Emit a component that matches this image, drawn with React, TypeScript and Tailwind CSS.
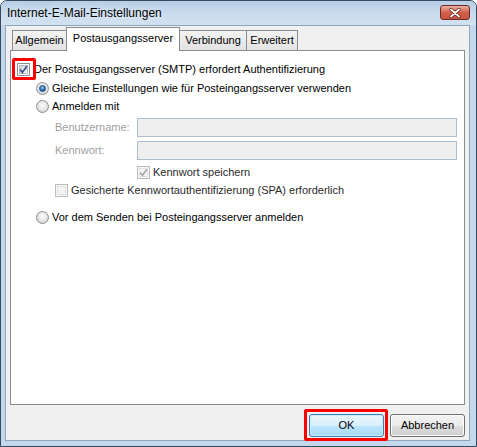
import clsx from "clsx";

const font = "font-['Liberation_Sans',Arial,sans-serif]";

function CheckBox({ checked, disabled }: { checked?: boolean; disabled?: boolean }) {
  return (
    <span
      className={clsx(
        "w-[13px] h-[13px] shrink-0 border flex items-center justify-center",
        disabled ? "border-[#bcbcbc] bg-[#f7f7f7]" : "border-[#8e8f8f] bg-white"
      )}
    >
      <span
        className={clsx(
          "w-[9px] h-[9px] relative",
          disabled
            ? "bg-[#f4f4f4] border border-[#e2e2e2]"
            : "bg-gradient-to-br from-[#c9d2df] to-[#f4f6f9] border border-[#b5bdc9]"
        )}
      >
        {checked && (
          <svg viewBox="0 0 11 11" className="absolute -left-[2px] -top-[2px] w-[11px] h-[11px]">
            <path
              d="M2.2 5.6 L4.4 8.4 L8.9 2.3"
              fill="none"
              stroke={disabled ? "#a9a9a9" : "#3f4f86"}
              strokeWidth="1.7"
            />
          </svg>
        )}
      </span>
    </span>
  );
}

function Radio({ selected }: { selected?: boolean }) {
  return (
    <span className="w-[13px] h-[13px] shrink-0 rounded-full border border-[#8e8f8f] bg-[radial-gradient(circle_at_50%_40%,#f8f8f8_15%,#d9d9d9_70%,#c8c8c8)] flex items-center justify-center">
      {selected && (
        <span className="w-[7px] h-[7px] rounded-full bg-[radial-gradient(circle_at_45%_35%,#b5e0ff,#2f7fc8_45%,#0c3b73)] border border-[#1b4f86]" />
      )}
    </span>
  );
}

function Field({ label, className }: { label: string; className?: string }) {
  return (
    <div className={clsx("flex items-center pl-[44px]", className)}>
      <span className="w-[82px] text-[#a0a0a0]">{label}</span>
      <div className="w-[320px] h-[19px] border border-[#afbccb] bg-[#efefef]" />
    </div>
  );
}

function Tab({ label, active, className }: { label: string; active?: boolean; className?: string }) {
  return (
    <div
      className={clsx(
        "flex items-center justify-center border border-[#898c95] -ml-px",
        active
          ? "h-[24px] -mb-px bg-white border-b-0 relative z-10 pb-[3px]"
          : "h-[20px] bg-gradient-to-b from-[#f3f3f3] to-[#e3e3e3] border-b-0",
        className
      )}
    >
      {label}
    </div>
  );
}

export default function App() {
  return (
    <div className={clsx("w-[477px] h-[447px] bg-[#c4d7eb] border border-[#34485e] rounded-t-[7px] flex flex-col pl-[4px] pr-[6px] pb-[5px] text-[11px] text-black", font)}>
      {/* caption */}
      <div className="h-[24px] -mx-[4px] -mr-[6px] pl-[6px] pr-[6px] flex justify-between items-start bg-gradient-to-b from-[#b6cde6] via-[#c8daed] to-[#d3e2f1] rounded-t-[6px]">
        <span className="text-[12px] leading-[25px] [text-shadow:0_0_6px_#ffffff]">Internet-E-Mail-Einstellungen</span>
        <button className="mt-[4px] w-[30px] h-[15px] rounded-[3px] border border-[#6e2a22] bg-gradient-to-b from-[#e8b1a4] via-[#d25f4b] to-[#c9533f] flex items-center justify-center">
          <svg viewBox="0 0 12 10" className="w-[12px] h-[10px]">
            <path d="M2 1.5 L10 8.5 M10 1.5 L2 8.5" stroke="#5a1d16" strokeWidth="3.2" strokeLinecap="round" />
            <path d="M2 1.5 L10 8.5 M10 1.5 L2 8.5" stroke="#ffffff" strokeWidth="1.8" strokeLinecap="round" />
          </svg>
        </button>
      </div>

      {/* client area */}
      <div className="flex-1 flex flex-col bg-[#f0f0f0] border border-[#8fa5bb] px-[4px]">
        <div className="h-[24px] pt-[1px] flex items-end pl-[3px]">
          <Tab label="Allgemein" className="w-[55px]" />
          <Tab label="Postausgangsserver" active className="w-[114px]" />
          <Tab label="Verbindung" className="w-[68px]" />
          <Tab label="Erweitert" className="w-[52px]" />
        </div>

        <div className="flex-1 bg-white border border-[#898c95] flex flex-col">
          <div className="mt-[9px] h-[18px] flex items-center pl-[6px] gap-[4px] relative">
            <CheckBox checked />
            <span>Der Postausgangsserver (SMTP) erfordert Authentifizierung</span>
            <span className="absolute left-[1px] -top-[2px] w-[24px] h-[22px] border-[3px] border-[#ff0000] rounded-[2px]" />
          </div>
          <div className="mt-[1px] h-[18px] flex items-center pl-[25px] gap-[3px]">
            <Radio selected />
            <span>Gleiche Einstellungen wie für Posteingangsserver verwenden</span>
          </div>
          <div className="h-[18px] flex items-center pl-[25px] gap-[3px]">
            <Radio />
            <span>Anmelden mit</span>
          </div>
          <Field label="Benutzername:" className="mt-[3px]" />
          <Field label="Kennwort:" className="mt-[4px]" />
          <div className="mt-[3px] h-[18px] flex items-center pl-[126px] gap-[3px]">
            <CheckBox checked disabled />
            <span className="text-[#2a2a2a]">Kennwort speichern</span>
          </div>
          <div className="h-[18px] flex items-center pl-[44px] gap-[3px]">
            <CheckBox disabled />
            <span className="text-[#2a2a2a]">Gesicherte Kennwortauthentifizierung (SPA) erforderlich</span>
          </div>
          <div className="mt-[9px] h-[18px] flex items-center pl-[25px] gap-[3px]">
            <Radio />
            <span>Vor dem Senden bei Posteingangsserver anmelden</span>
          </div>
        </div>

        <div className="mt-[9px] mb-[3px] h-[23px] flex justify-end gap-[6px]">
          <div className="relative">
            <button className="w-[75px] h-[23px] rounded-[3px] border border-[#3c7fb1] bg-[linear-gradient(#eaf6fd,#d9f0fc_50%,#bee6fd_50%,#a7d9f5)] shadow-[inset_0_0_0_1px_#c6ecfd]">
              OK
            </button>
            <span className="absolute -left-[5px] -right-[4px] -top-[5px] -bottom-[4px] border-[3px] border-[#ff0000] rounded-[2px]" />
          </div>
          <button className="w-[75px] h-[23px] rounded-[3px] border border-[#707070] bg-[linear-gradient(#f2f2f2,#ebebeb_50%,#dddddd_50%,#cfcfcf)] shadow-[inset_0_0_0_1px_#fcfcfc]">
            Abbrechen
          </button>
        </div>
      </div>
    </div>
  );
}
